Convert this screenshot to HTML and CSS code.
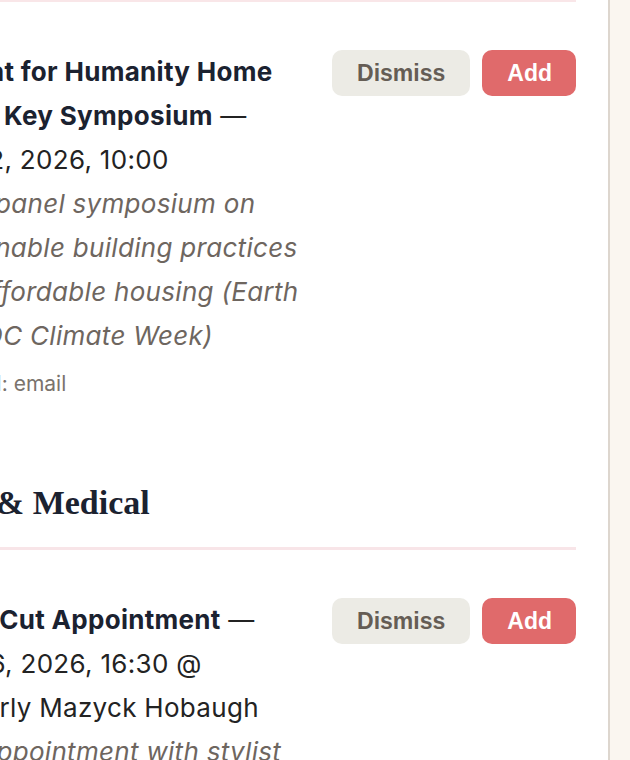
FILE: index.html
```html
<!DOCTYPE html>
<html lang="en">
  <head>
    <meta charset="UTF-8" />
    <meta name="viewport" content="width=device-width, initial-scale=1.0" />
    <title>Suggested Events</title>
    <link rel="stylesheet" href="styles.css">
  </head>
  <body>
    <div class="layout">
      <main class="panel">
        <div class="content">
          <div class="item">
            <div class="item-text">
              <p class="item-title">
                <strong>Habitat for Humanity Home<br>Depot Key Symposium</strong> &mdash;<br>Apr 22, 2026, 10:00
              </p>
              <p class="item-desc">Open panel symposium on<br>sustainable building practices<br>and affordable housing (Earth<br>Day, DC Climate Week)</p>
              <p class="item-source">Channel: email</p>
            </div>
            <div class="item-actions">
              <button class="btn btn-dismiss">Dismiss</button>
              <button class="btn btn-add">Add</button>
            </div>
          </div>

          <h2 class="section-title">Hair &amp; Medical</h2>

          <div class="item">
            <div class="item-text">
              <p class="item-title">
                <strong>Salon Cut Appointment</strong> &mdash;<br>June 6, 2026, 16:30 @<br>Kimberly Mazyck Hobaugh
              </p>
              <p class="item-desc">Hair appointment with stylist<br>to trim and style</p>
            </div>
            <div class="item-actions">
              <button class="btn btn-dismiss">Dismiss</button>
              <button class="btn btn-add">Add</button>
            </div>
          </div>
        </div>
      </main>
      <aside class="side"></aside>
    </div>
  </body>
</html>
```

FILE: styles.css
```css
body {
  margin: 0;
  background: #faf6f0;
  font-family: Inter, "Noto Sans", sans-serif;
  overflow: hidden;
}
.layout {
  display: flex;
  height: 760px;
}
.panel {
  width: 608px;
  flex-shrink: 0;
  background: #fff;
  border-right: 2px solid #ddd6ce;
  overflow: hidden;
}
.content {
  margin-left: -80px;
  margin-right: 32px;
  border-top: 2px solid #f9e6e8;
}
.item {
  display: flex;
  justify-content: space-between;
  gap: 16px;
  padding: 48px 0 48px;
}
.item-text p {
  margin: 0;
}
.item-title {
  font-size: 26px;
  line-height: 44px;
  letter-spacing: 0.3px;
  color: #232323;
}
.item-title strong {
  font-weight: 700;
  color: #1b2230;
}
.item-desc {
  font-size: 26px;
  line-height: 44px;
  letter-spacing: 0.3px;
  font-style: italic;
  color: #6e665f;
}
.item-source {
  margin-top: 4px !important;
  font-size: 21px;
  line-height: 44px;
  color: #7a736d;
}
.item-actions {
  display: flex;
  gap: 12px;
  align-items: flex-start;
  flex-shrink: 0;
}
.btn {
  height: 46px;
  padding: 0 25px;
  border: none;
  border-radius: 10px;
  font-family: "Liberation Sans", Arial, sans-serif;
  font-size: 23px;
  font-weight: 700;
}
.btn-dismiss {
  background: #ecebe5;
  color: #655d55;
}
.btn-add {
  padding: 0 24px 0 25px;
  background: #e06a6b;
  color: #fff;
}
.section-title {
  margin: 27px 0 0;
  padding-bottom: 22px;
  border-bottom: 3px solid #f8e5e8;
  font-family: "Liberation Serif", serif;
  font-size: 34px;
  line-height: 44px;
  font-weight: 700;
  color: #1b2230;
}
.side {
  flex: 1;
}
```
